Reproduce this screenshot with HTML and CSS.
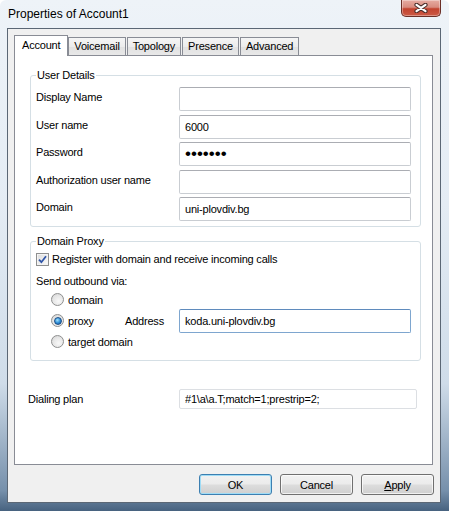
FILE: index.html
```html
<!DOCTYPE html>
<html>
<head>
  <title>Properties of Account1</title>
  <link rel="stylesheet" href="styles.css">
</head>
<body>
  <div class="window">
    <div class="titlebar">
      <span class="title">Properties of Account1</span>
      <button class="close" title="Close">
        <svg width="14" height="10" viewBox="0 0 14 10">
          <path d="M2.5 1.8 L11.5 8.2 M11.5 1.8 L2.5 8.2" stroke="#4a2f2b" stroke-width="4.2" stroke-linecap="round" fill="none"/>
          <path d="M2.5 1.8 L11.5 8.2 M11.5 1.8 L2.5 8.2" stroke="#fff" stroke-width="2.2" stroke-linecap="round" fill="none"/>
        </svg>
      </button>
    </div>

    <div class="client">
      <div class="tabs">
        <div class="tab active">Account</div>
        <div class="tab">Voicemail</div>
        <div class="tab">Topology</div>
        <div class="tab">Presence</div>
        <div class="tab">Advanced</div>
      </div>

      <div class="page">
        <fieldset class="group">
          <legend>User Details</legend>
          <div class="form-grid">
            <label>Display Name</label>
            <input type="text" class="field" value="">
            <label>User name</label>
            <input type="text" class="field" value="6000">
            <label>Password</label>
            <input type="password" class="field pw" value="1234567">
            <label>Authorization user name</label>
            <input type="text" class="field" value="">
            <label>Domain</label>
            <input type="text" class="field" value="uni-plovdiv.bg">
          </div>
        </fieldset>

        <fieldset class="group proxy">
          <legend>Domain Proxy</legend>
          <div class="check-row">
            <span class="checkbox">
              <svg width="9" height="9" viewBox="0 0 9 9">
                <path d="M1 4.6 L3.4 7.2 L8 1.2" stroke="#2f55a8" stroke-width="1.8" fill="none"/>
              </svg>
            </span>
            <span>Register with domain and receive incoming calls</span>
          </div>
          <div class="send-label">Send outbound via:</div>
          <div class="radios">
            <div class="radio-row">
              <span class="option"><span class="radio"></span>domain</span>
            </div>
            <div class="radio-row">
              <span class="option"><span class="radio selected"></span>proxy</span>
              <span class="addr-label">Address</span>
              <input type="text" class="field hot" value="koda.uni-plovdiv.bg">
            </div>
            <div class="radio-row">
              <span class="option"><span class="radio"></span>target domain</span>
            </div>
          </div>
        </fieldset>

        <div class="dial-row">
          <label>Dialing plan</label>
          <input type="text" class="field plain" value="#1\a\a.T;match=1;prestrip=2;">
        </div>
      </div>

      <div class="buttons">
        <button class="btn default">OK</button>
        <button class="btn">Cancel</button>
        <button class="btn"><u>A</u>pply</button>
      </div>
    </div>
  </div>
</body>
</html>
```

FILE: styles.css
```css
body {
  margin: 0;
  font-family: "Liberation Sans", Arial, sans-serif;
  font-size: 11px;
  letter-spacing: -0.2px;
  color: #000;
}

.window {
  width: 449px;
  height: 511px;
  box-sizing: border-box;
  display: flex;
  flex-direction: column;
  padding: 0 8px 8px 7px;
  border-radius: 6px 6px 0 0;
  background: linear-gradient(180deg, #eef3f8 0%, #e4ecf4 40%, #cfdce9 75%, #7690ab 96%, #47627f 100%);
}

.titlebar {
  height: 28px;
  display: flex;
  justify-content: space-between;
  align-items: flex-start;
}

.title {
  margin-top: 6px;
  padding-left: 1px;
  font-size: 12px;
  line-height: 16px;
  letter-spacing: 0;
}

.close {
  width: 40px;
  height: 17px;
  padding: 0;
  display: flex;
  align-items: center;
  justify-content: center;
  border: 1px solid #6b2f27;
  border-top: none;
  border-radius: 0 0 5px 5px;
  background: linear-gradient(180deg, #e6aca2 0%, #d88b7f 45%, #c2432f 55%, #cc5a45 100%);
  box-shadow: inset 0 0 0 1px rgba(255, 255, 255, 0.35);
}

.client {
  flex: 1;
  display: flex;
  flex-direction: column;
  background: #f0f0f0;
  border: 1px solid #5b6775;
  padding: 6px 7px 7px 6px;
}

/* tabs */
.tabs {
  display: flex;
  align-items: flex-start;
  height: 21px;
  position: relative;
  z-index: 1;
}

.tab {
  height: 18px;
  margin-top: 2px;
  margin-right: 1px;
  box-sizing: border-box;
  padding: 0 5px;
  line-height: 17px;
  border: 1px solid #898c95;
  border-bottom: none;
  background: linear-gradient(180deg, #f5f5f5 0%, #ececec 50%, #e1e1e1 52%, #e8e8e8 100%);
}

.tab.active {
  height: 21px;
  margin-top: 0;
  margin-right: 0;
  padding: 0 7px;
  line-height: 19px;
  background: #fff;
}

.page {
  flex: 1;
  margin-top: -1px;
  background: #fff;
  border: 1px solid #898c95;
  padding: 13px 11px 0 15px;
}

/* group boxes */
.group {
  margin: 0;
  padding: 5px 8px 5px 5px;
  border: 1px solid #d5dfe5;
  border-radius: 3px;
}

.group legend {
  padding: 0 1px;
  line-height: 13px;
}

.group.proxy {
  margin-top: 8px;
  padding: 4px 8px 8px 5px;
}

.form-grid {
  display: grid;
  grid-template-columns: 143px 232px;
  row-gap: 3.5px;
  align-items: start;
}

.form-grid label {
  padding-top: 3px;
  line-height: 14px;
}

.field {
  height: 24px;
  box-sizing: border-box;
  padding: 0 5px;
  font-family: inherit;
  font-size: 11px;
  letter-spacing: inherit;
  color: #000;
  border: 1px solid #c9cdd2;
  border-top-color: #abadb3;
  border-radius: 2px;
  background: #fff;
  outline: none;
}

.field.pw {
  font-size: 17px;
  letter-spacing: 0;
}

.field.hot {
  width: 232px;
  border-color: #7ea6cf;
  border-top-color: #5f8bbd;
}

.field.plain {
  height: 20px;
  border-color: #dcdfe3;
}

/* checkbox and radios */
.check-row {
  display: flex;
  align-items: center;
  gap: 3px;
  line-height: 14px;
}

.checkbox {
  flex: none;
  width: 13px;
  height: 13px;
  box-sizing: border-box;
  display: flex;
  align-items: center;
  justify-content: center;
  border: 1px solid #8e8f8f;
  background: linear-gradient(135deg, #dcdcdc, #fbfbfb);
  box-shadow: inset 0 0 0 1px #f4f4f4;
}

.send-label {
  margin-top: 8px;
  line-height: 14px;
}

.radios {
  padding-left: 15px;
  margin-top: 1px;
}

.radio-row {
  height: 21px;
  display: flex;
  align-items: center;
}

.option {
  min-width: 74px;
  display: flex;
  align-items: center;
  gap: 4px;
  white-space: nowrap;
}

.radio {
  flex: none;
  width: 13px;
  height: 13px;
  box-sizing: border-box;
  border-radius: 50%;
  border: 1px solid #8e8f8f;
  background: radial-gradient(circle at 60% 65%, #f8f8f8 0%, #e6e6e6 55%, #cfcfcf 100%);
  display: flex;
  align-items: center;
  justify-content: center;
}

.radio.selected::after {
  content: "";
  width: 6px;
  height: 6px;
  border-radius: 50%;
  background: radial-gradient(circle at 40% 35%, #9fe2ff 0%, #2a8ad4 55%, #16539a 100%);
  border: 0.5px solid #1d4e86;
}

.addr-label {
  width: 54px;
}

/* dialing plan */
.dial-row {
  margin-top: 28px;
  margin-left: -2px;
  display: grid;
  grid-template-columns: 151px 238px;
  align-items: center;
}

.dial-row label {
  line-height: 14px;
}

/* bottom buttons */
.buttons {
  display: flex;
  justify-content: flex-end;
  gap: 8px;
  margin-top: 9px;
  margin-right: -1px;
}

.btn {
  width: 73px;
  height: 21px;
  padding: 0;
  font-family: inherit;
  font-size: 11px;
  letter-spacing: inherit;
  color: #000;
  border: 1px solid #707070;
  border-radius: 3px;
  background: linear-gradient(180deg, #f2f2f2 0%, #ebebeb 48%, #dddddd 52%, #cfcfcf 100%);
  box-shadow: inset 0 0 0 1px rgba(255, 255, 255, 0.7);
}

.btn.default {
  border-color: #3c7fb1;
  box-shadow: inset 0 0 0 1px #9fdcf6;
}
```
